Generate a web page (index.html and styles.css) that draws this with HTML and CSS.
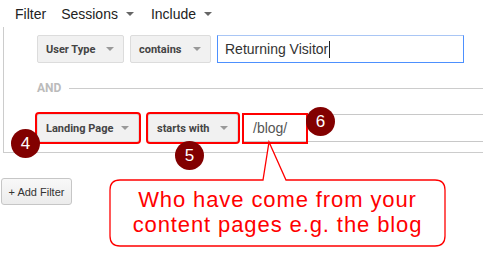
FILE: index.html
```html
<!DOCTYPE html>
<html lang="en">
<head>
    <meta charset="UTF-8">
    <title>Segment Filter</title>
    <link rel="stylesheet" href="styles.css">
</head>
<body>
    <div class="filter-head">
        <span class="title">Filter</span>
        <span class="dd">Sessions <i class="caret"></i></span>
        <span class="dd">Include <i class="caret"></i></span>
    </div>

    <div class="panel">
        <div class="cond">
            <div class="sel w-type">User Type <i class="caret light"></i></div>
            <div class="sel w-contains">contains <i class="caret light"></i></div>
            <div class="field focus">Returning Visitor<span class="cursor"></span></div>
        </div>

        <div class="and"><span>AND</span></div>

        <div class="cond">
            <div class="sel w-landing mark">Landing Page <i class="caret light"></i></div>
            <div class="sel w-starts mark">starts with <i class="caret light"></i></div>
            <div class="field wide"><span class="mark value">/blog/</span></div>
        </div>
    </div>

    <button class="add-filter">+ Add Filter</button>

    <!-- annotations -->
    <span class="badge b4">4</span>
    <span class="badge b5">5</span>
    <span class="badge b6">6</span>

    <div class="callout">
        <svg class="bubble" width="345" height="110" viewBox="105 140 345 110">
            <path d="M120 180 H263 L269 142 L286 180 H435 Q445 180 445 190 V236 Q445 246 435 246 H120 Q110 246 110 236 V190 Q110 180 120 180 Z"
                  fill="#fff" stroke="#ff0000" stroke-width="1.3"/>
        </svg>
        <p class="callout-text">Who have come from your<br>content pages e.g. the blog</p>
    </div>
</body>
</html>
```

FILE: styles.css
```css
body {
    margin: 0;
    font-family: Roboto, 'Liberation Sans', Arial, sans-serif;
    background: #fff;
    color: #222;
    position: relative;
    width: 483px;
    height: 265px;
    overflow: hidden;
}

.filter-head {
    height: 27px;
    display: flex;
    align-items: center;
    padding-left: 15px;
    font-family: 'Liberation Sans', Arial, sans-serif;
    font-size: 14px;
    color: #222;
}

.filter-head .title {
    margin-right: 15px;
}

.filter-head .dd {
    display: flex;
    align-items: center;
    margin-right: 17px;
}

.caret {
    display: inline-block;
    width: 0;
    height: 0;
    border-left: 4px solid transparent;
    border-right: 4px solid transparent;
    border-top: 4px solid #666;
    margin-left: 8px;
}

.caret.light {
    border-top-color: #999;
    margin-left: auto;
}

.panel {
    margin-left: 3px;
    border-left: 1px solid #ccc;
    border-bottom: 1px solid #ccc;
    padding: 8px 0 10px 33px;
}

.cond {
    display: flex;
    height: 28px;
}

.sel {
    box-sizing: border-box;
    height: 28px;
    display: flex;
    align-items: center;
    padding: 0 9px 0 8px;
    white-space: nowrap;
    background: #f1f1f1;
    border: 1px solid #dcdcdc;
    border-radius: 2px;
    font-size: 11px;
    font-weight: bold;
    color: #444;
}

.w-type { width: 87px; margin-right: 6px; }
.w-contains { width: 81px; margin-right: 6px; }
.w-landing { width: 102px; margin-right: 9px; }
.w-starts { width: 90px; margin-right: 5px; }

.field {
    box-sizing: border-box;
    height: 28px;
    display: flex;
    align-items: center;
    font-family: 'Liberation Sans', Arial, sans-serif;
    font-size: 14px;
    color: #333;
}

.field.focus {
    width: 247px;
    border: 1px solid #4d90fe;
    border-top-color: #a9c6f5;
    padding-left: 7px;
}

.cursor {
    display: inline-block;
    width: 1px;
    height: 17px;
    background: #222;
    margin-left: 1px;
}

.field.wide {
    flex: 1;
    border-top: 1px solid #c8c8c8;
    border-bottom: 1px solid #c8c8c8;
    border-left: 1px solid #c8c8c8;
    color: #555;
}

.mark {
    outline: 2px solid #ff0000;
    outline-offset: 0;
}

.value {
    box-sizing: border-box;
    width: 62px;
    height: 27px;
    display: flex;
    align-items: center;
    padding-left: 9px;
}

.and {
    display: flex;
    align-items: center;
    height: 24px;
    margin: 13px 0 14px;
    font-size: 12px;
    font-weight: bold;
    color: #bbb;
}

.and::after {
    content: "";
    flex: 1;
    height: 1px;
    background: #ccc;
    margin-left: 8px;
}

.add-filter {
    display: block;
    margin: 25px 0 0 1px;
    width: 71px;
    height: 27px;
    padding: 0;
    font-family: 'Liberation Sans', Arial, sans-serif;
    font-size: 11px;
    color: #333;
    background: linear-gradient(#f8f8f8, #ececec);
    border: 1px solid #c6c6c6;
    border-radius: 3px;
}

.badge {
    position: absolute;
    width: 29px;
    height: 29px;
    border-radius: 50%;
    background: #820000;
    color: #fff;
    font-family: 'Liberation Sans', Arial, sans-serif;
    font-size: 17px;
    display: flex;
    align-items: center;
    justify-content: center;
}

.b4 { left: 11px; top: 129px; }
.b5 { left: 175px; top: 141px; }
.b6 { left: 306px; top: 107px; }

.callout {
    position: absolute;
    left: 105px;
    top: 140px;
    width: 345px;
    height: 110px;
}

.bubble {
    position: absolute;
    left: 0;
    top: 0;
}

.callout-text {
    position: absolute;
    left: 0;
    top: 47px;
    width: 345px;
    margin: 0;
    text-align: center;
    font-family: 'Liberation Sans', Arial, sans-serif;
    font-size: 22px;
    letter-spacing: 0.9px;
    line-height: 25px;
    color: #ff0000;
}
```
